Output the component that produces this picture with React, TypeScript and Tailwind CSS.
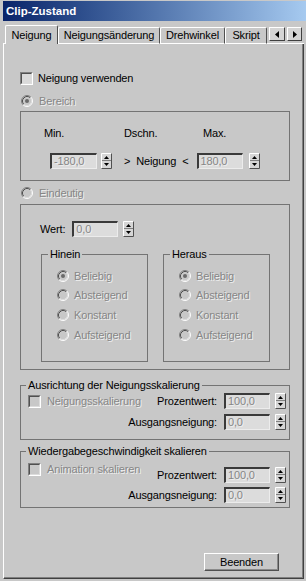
import React from 'react';

const dis = 'text-[#868686] [text-shadow:1px_1px_0_#efefef]';

function Radio({ checked }: { checked?: boolean }) {
  return (
    <svg width="12" height="12" viewBox="0 0 12 12" className="shrink-0">
      <circle cx="6" cy="6" r="4.5" fill="#c8c8c8" />
      <path d="M2.11 9.89 A5.5 5.5 0 0 1 9.89 2.11" stroke="#808080" fill="none" />
      <path d="M9.89 2.11 A5.5 5.5 0 0 1 2.11 9.89" stroke="#ffffff" fill="none" />
      <path d="M2.82 9.18 A4.5 4.5 0 0 1 9.18 2.82" stroke="#505050" fill="none" />
      <path d="M9.18 2.82 A4.5 4.5 0 0 1 2.82 9.18" stroke="#dedede" fill="none" />
      {checked && <circle cx="6" cy="6" r="2" fill="#6a6a6a" />}
    </svg>
  );
}

function Check({ disabled }: { disabled?: boolean }) {
  return (
    <div className="h-[13px] w-[13px] shrink-0 border border-t-[#808080] border-l-[#808080] border-r-white border-b-white">
      <div
        className={`h-full w-full border border-t-[#505050] border-l-[#505050] border-r-[#dcdcdc] border-b-[#dcdcdc] ${
          disabled ? 'bg-[#c8c8c8]' : 'bg-[#dadada]'
        }`}
      />
    </div>
  );
}

function Spin({ className = '' }: { className?: string }) {
  return (
    <svg width="11" height="16" viewBox="0 0 11 16" className={`shrink-0 ${className}`}>
      <rect x="0" y="0" width="11" height="16" fill="#d6d6d6" />
      <path d="M0.5 15.5 V0.5 H10.5" stroke="#ffffff" fill="none" />
      <path d="M0.5 15.5 H10.5 V0.5" stroke="#505050" fill="none" />
      <path d="M1 7.5 H10" stroke="#808080" />
      <path d="M5.5 3 L8 6 H3 Z" fill="#000" />
      <path d="M3 10 H8 L5.5 13 Z" fill="#000" />
    </svg>
  );
}

function Field({ value, className = '' }: { value: string; className?: string }) {
  return (
    <div
      className={`h-[16px] shrink-0 border-t-2 border-l-2 border-r border-b border-t-[#3a3a3a] border-l-[#3a3a3a] border-r-[#ececec] border-b-[#ececec] bg-[#dcdcdc] pl-[2px] leading-[12px] ${dis} ${className}`}
    >
      {value}
    </div>
  );
}

function RadioRow({ label, checked, className = '' }: { label: string; checked?: boolean; className?: string }) {
  return (
    <div className={`flex h-[12px] items-center ${className}`}>
      <Radio checked={checked} />
      <span className={`ml-[5px] ${dis}`}>{label}</span>
    </div>
  );
}

function Direction({ title }: { title: string }) {
  return (
    <fieldset className="h-[114px] w-[107px] border border-[#747474]">
      <legend className="ml-[6px] px-[2px]">{title}</legend>
      <div className="flex flex-col pl-[15px]">
        <RadioRow label="Beliebig" checked className="mt-[9px]" />
        <RadioRow label="Absteigend" className="mt-[7px]" />
        <RadioRow label="Konstant" className="mt-[8px]" />
        <RadioRow label="Aufsteigend" className="mt-[8px]" />
      </div>
    </fieldset>
  );
}

function ValueRow({ label, value, className = '' }: { label: string; value: string; className?: string }) {
  return (
    <div className={`flex h-[16px] items-center ${className}`}>
      <span>{label}</span>
      <Field value={value} className="ml-[7px] w-[46px]" />
      <Spin className="ml-[5px]" />
    </div>
  );
}

export default function App() {
  const tabs = [
    { label: 'Neigungsänderung', w: 'w-[102px]' },
    { label: 'Drehwinkel', w: 'w-[65px]' },
    { label: 'Skript', w: 'w-[42px]' },
  ];

  return (
    <div className="h-[581px] w-[306px] overflow-hidden whitespace-nowrap bg-[#c8c8c8] pl-[3px] pt-[1px] font-['Liberation_Sans',Arial,sans-serif] text-[11px] leading-[13px] tracking-[-0.15px] text-black">
      {/* Title bar */}
      <div className="flex h-[20px] w-[303px] items-center bg-gradient-to-r from-[#0a246a] to-[#a6caf0] pl-[3px] text-[11.5px] font-bold tracking-normal text-white">
        Clip-Zustand
      </div>

      {/* Tabs */}
      <div className="flex h-[23px] w-[301px] items-end">
        <div className="h-full w-[2px] border-b border-white" />
        <div className="flex h-[19px] w-[53px] items-center justify-center rounded-t-[2px] border-l border-t border-r border-white border-r-[#505050]">
          Neigung
        </div>
        {tabs.map((t) => (
          <div
            key={t.label}
            className={`flex h-[17px] ${t.w} items-center justify-center rounded-t-[2px] border border-white border-r-[#505050] border-b-white`}
          >
            {t.label}
          </div>
        ))}
        <div className="flex h-full flex-1 items-start border-b border-white pt-[6px]">
          <div className="ml-[2px] flex h-[14px] w-[16px] items-center justify-center border border-t-white border-l-white border-r-[#404040] border-b-[#404040] bg-[#d4d4d4]">
            <svg width="4" height="7" viewBox="0 0 4 7">
              <path d="M4 0 V7 L0 3.5 Z" fill="#000" />
            </svg>
          </div>
          <div className="ml-[2px] flex h-[14px] w-[15px] items-center justify-center border border-t-white border-l-white border-r-[#404040] border-b-[#404040] bg-[#d4d4d4]">
            <svg width="4" height="7" viewBox="0 0 4 7">
              <path d="M0 0 V7 L4 3.5 Z" fill="#000" />
            </svg>
          </div>
        </div>
      </div>

      {/* Tab panel */}
      <div className="flex h-[535px] w-[301px] flex-col border-l border-r border-b border-l-white border-r-[#404040] border-b-[#404040] pl-[16px] shadow-[inset_-1px_-1px_0_#808080]">
        <div className="mt-[28px] flex h-[13px] items-center">
          <Check />
          <span className="ml-[5px]">Neigung verwenden</span>
        </div>

        <div className="ml-[1px] mt-[10px] flex h-[12px] items-center">
          <Radio checked />
          <span className={`ml-[6px] ${dis}`}>Bereich</span>
        </div>

        <div className="mt-[4px] h-[70px] w-[270px] border border-[#747474]">
          <div className="mt-[15px] flex pl-[23px]">
            <span className="w-[80px]">Min.</span>
            <span className="w-[79px]">Dschn.</span>
            <span>Max.</span>
          </div>
          <div className="mt-[13px] flex h-[16px] items-center pl-[29px]">
            <Field value="-180,0" className="w-[47px]" />
            <Spin className="ml-[4px]" />
            <span className="ml-[12px]">&gt;</span>
            <span className="ml-[6px]">Neigung</span>
            <span className="ml-[6px]">&lt;</span>
            <Field value="180,0" className="ml-[8px] w-[46px]" />
            <Spin className="ml-[6px]" />
          </div>
        </div>

        <div className="ml-[1px] mt-[6px] flex h-[12px] items-center">
          <Radio />
          <span className={`ml-[6px] ${dis}`}>Eindeutig</span>
        </div>

        <div className="mt-[5px] h-[166px] w-[270px] border border-[#747474]">
          <ValueRow label="Wert:" value="0,0" className="mt-[16px] pl-[19px]" />
          <div className="mt-[11px] flex gap-[15px] pl-[20px]">
            <Direction title="Hinein" />
            <Direction title="Heraus" />
          </div>
        </div>

        <fieldset className="mt-[9px] h-[61px] w-[270px] border border-[#747474]">
          <legend className="ml-[5px] px-[2px]">Ausrichtung der Neigungsskalierung</legend>
          <div className="mt-[1px] flex h-[16px] items-center pl-[7px] pr-[3px]">
            <Check disabled />
            <span className={`ml-[6px] ${dis}`}>Neigungsskalierung</span>
            <ValueRow label="Prozentwert:" value="100,0" className="ml-auto" />
          </div>
          <div className="mt-[5px] flex justify-end pr-[3px]">
            <ValueRow label="Ausgangsneigung:" value="0,0" />
          </div>
        </fieldset>

        <fieldset className="mt-[5px] h-[63px] w-[270px] border border-[#747474]">
          <legend className="ml-[5px] px-[2px]">Wiedergabegeschwindigkeit skalieren</legend>
          <div className="flex items-start pl-[7px] pr-[3px]">
            <div className="mt-[5px] flex h-[13px] items-center">
              <Check disabled />
              <span className={`ml-[6px] ${dis}`}>Animation skalieren</span>
            </div>
            <ValueRow label="Prozentwert:" value="100,0" className="ml-auto mt-[9px]" />
          </div>
          <div className="mt-[4px] flex justify-end pr-[3px]">
            <ValueRow label="Ausgangsneigung:" value="0,0" />
          </div>
        </fieldset>

        <button className="ml-[184px] mt-[45px] flex h-[18px] w-[75px] items-center justify-center border border-t-white border-l-white border-r-[#505050] border-b-[#505050] bg-[#c8c8c8] shadow-[inset_-1px_-1px_0_#8a8a8a]">
          Beenden
        </button>
      </div>
    </div>
  );
}
